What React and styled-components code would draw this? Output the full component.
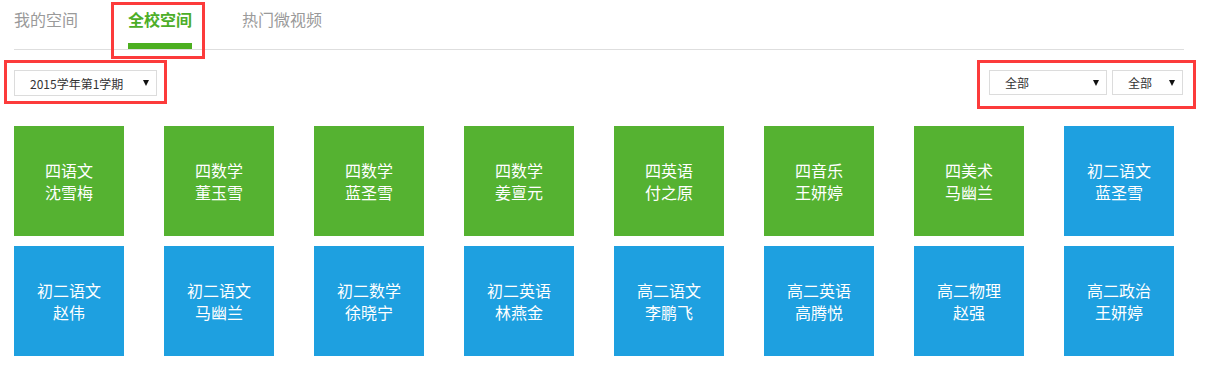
import React from "react";
import styled, { createGlobalStyle } from "styled-components";

const GlobalStyle = createGlobalStyle`
  body {
    margin: 0;
    background: #fff;
    font-family: "Noto Sans CJK SC", "Noto Sans", sans-serif;
  }
`;

const Page = styled.div`
  width: 1170px;
  padding-left: 14px;
`;

const Tabs = styled.div`
  display: flex;
  gap: 50px;
  height: 49px;
  border-bottom: 1px solid #dedede;
`;

const Tab = styled.div`
  position: relative;
  display: flex;
  flex-direction: column;
  font-size: 16px;
  line-height: 38px;
  color: ${(p) => (p.$active ? "#4cae28" : "#9a9a9a")};
  font-weight: ${(p) => (p.$active ? 700 : 400)};
  cursor: pointer;

  &::after {
    content: "";
    display: block;
    height: 6px;
    margin-top: 5px;
    background: ${(p) => (p.$active ? "#4caf20" : "transparent")};
  }
`;

// red annotation frame drawn over the marked control
const Mark = styled.div`
  position: relative;

  &::before {
    content: "";
    position: absolute;
    top: ${(p) => p.$t}px;
    left: ${(p) => p.$l}px;
    right: ${(p) => p.$r}px;
    bottom: ${(p) => p.$b}px;
    border: 3px solid #fc3b3b;
    pointer-events: none;
  }
`;

const Toolbar = styled.div`
  display: flex;
  justify-content: space-between;
  align-items: flex-start;
  padding: 20px 1px 0 0;
  height: 76px;
  box-sizing: border-box;
`;

const Filters = styled.div`
  display: flex;
  gap: 5px;
`;

const Select = styled.div`
  display: flex;
  align-items: center;
  justify-content: space-between;
  box-sizing: border-box;
  width: ${(p) => p.$w}px;
  height: ${(p) => p.$h || 26}px;
  padding: 0 7px 0 15px;
  border: 1px solid #dcdcdc;
  font-size: 12px;
  color: #333;
  background: #fff;
`;

const Arrow = styled.span`
  width: 0;
  height: 0;
  border-left: 3.5px solid transparent;
  border-right: 3.5px solid transparent;
  border-top: 6px solid #111;
`;

const Grid = styled.div`
  display: grid;
  grid-template-columns: repeat(8, 110px);
  column-gap: 40px;
  row-gap: 10px;
`;

const Tile = styled.div`
  width: 110px;
  height: 110px;
  display: flex;
  flex-direction: column;
  align-items: center;
  justify-content: center;
  background: ${(p) => (p.$tone === "green" ? "#55b231" : "#1ea0e0")};
  color: #fff;
  font-size: 16px;
  line-height: 22px;
  text-align: center;
`;

const tiles = [
  ["四语文", "沈雪梅", "green"],
  ["四数学", "董玉雪", "green"],
  ["四数学", "蓝圣雪", "green"],
  ["四数学", "姜亶元", "green"],
  ["四英语", "付之原", "green"],
  ["四音乐", "王妍婷", "green"],
  ["四美术", "马幽兰", "green"],
  ["初二语文", "蓝圣雪", "blue"],
  ["初二语文", "赵伟", "blue"],
  ["初二语文", "马幽兰", "blue"],
  ["初二数学", "徐晓宁", "blue"],
  ["初二英语", "林燕金", "blue"],
  ["高二语文", "李鹏飞", "blue"],
  ["高二英语", "高腾悦", "blue"],
  ["高二物理", "赵强", "blue"],
  ["高二政治", "王妍婷", "blue"],
];

const App = () => {
  return (
    <Page>
      <GlobalStyle />
      <Tabs>
        <Tab>我的空间</Tab>
        <Mark $t={2} $l={-17} $r={-13} $b={-10}>
          <Tab $active>全校空间</Tab>
        </Mark>
        <Tab>热门微视频</Tab>
      </Tabs>
      <Toolbar>
        <Mark $t={-10} $l={-10} $r={-10} $b={-8}>
          <Select $w={143}>
            <span>2015学年第1学期</span>
            <Arrow />
          </Select>
        </Mark>
        <Mark $t={-10} $l={-12} $r={-13} $b={-14}>
          <Filters>
            <Select $w={118} $h={25}>
              <span>全部</span>
              <Arrow />
            </Select>
            <Select $w={71} $h={25}>
              <span>全部</span>
              <Arrow />
            </Select>
          </Filters>
        </Mark>
      </Toolbar>
      <Grid>
        {tiles.map(([course, teacher, tone], i) => (
          <Tile key={i} $tone={tone}>
            <div>{course}</div>
            <div>{teacher}</div>
          </Tile>
        ))}
      </Grid>
    </Page>
  );
};

export default App;
